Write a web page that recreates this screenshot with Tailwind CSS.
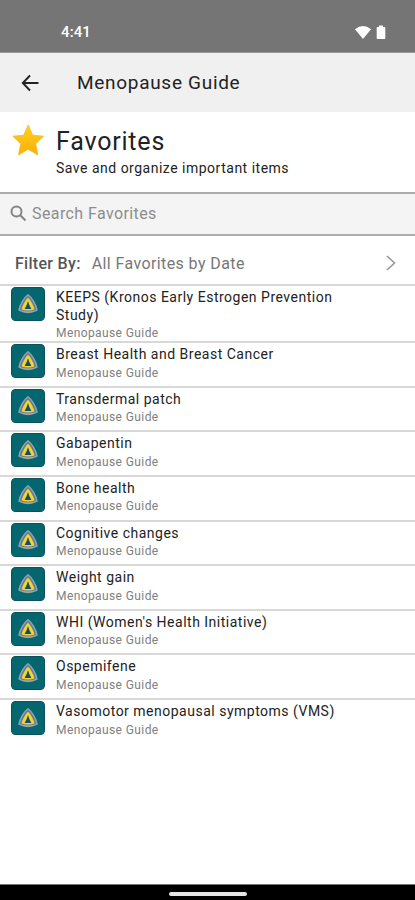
<!DOCTYPE html>
<html lang="en">
<head>
<meta charset="utf-8">
<title>Favorites</title>
<script src="https://cdn.jsdelivr.net/npm/@tailwindcss/browser@4"></script>
</head>
<body class="bg-white">
<svg class="hidden">
  <symbol id="guide" viewBox="0 0 33 33">
    <rect x=".5" y=".5" width="32" height="32" rx="4" fill="#04666f" stroke="#0b525b"/>
    <path d="M16.5 7.5C20 10 24.5 17 25.2 22.5C20 25.2 13 25.2 7.8 22.5C8.5 17 13 10 16.5 7.5Z" fill="#667b91" stroke="#8fa3b5" stroke-width="1.4" stroke-linejoin="round"/>
    <path d="M16.5 10.5C19 13 22 18 22.7 21.8C19 23.2 14 23.2 10.3 21.8C11 18 14 13 16.5 10.5Z" fill="#f2d531"/>
    <path d="M16.5 13.5L17.8 17.5L19.8 21.3H13.2L15.2 17.5Z" fill="#174e64"/>
    <path d="M11 23.6Q16.5 25 22 23.6" fill="none" stroke="#b5a58c" stroke-width="1"/>
  </symbol>
</svg>
<div class="flex h-[900px] w-[415px] flex-col overflow-hidden bg-white font-['Roboto','Noto_Sans',sans-serif] text-[#222]">
  <div class="flex h-[53px] shrink-0 items-start border-b border-[#989898] bg-[#757575] pl-[61px] pr-[28px] pt-[23px] text-white">
    <span class="text-[15px] font-medium leading-[19px] tracking-[.1px]">4:41</span>
    <svg class="ml-auto mt-[2px]" width="33" height="16" viewBox="0 0 33 16" fill="#fff"><path d="M1 4.2Q9-2.4 17 4.2L9 14Z"/><path d="M25 2V.5h4V2h1.5q.8 0 .8.8v10.4q0 .8-.8.8h-7q-.8 0-.8-.8V2.800q0-.8.8-.8Z"/></svg>
  </div>
  <div class="flex h-[59px] shrink-0 items-center bg-[#f0f0f0] pl-[21px]">
    <svg width="19" height="18" viewBox="0 0 19 18" fill="none" stroke="#222" stroke-width="1.9"><path d="M17.500 9H2M9 1.500L1.800 9L9 16.500"/></svg>
    <h1 class="ml-[37px] text-[19px] leading-[24px] tracking-[.7px]">Menopause Guide</h1>
  </div>
  <div class="flex h-[80px] shrink-0 pl-[12px] pt-[12px]">
    <svg width="33" height="33" viewBox="0 0 33 33"><defs><linearGradient id="gold" x2="0" y2="1"><stop stop-color="#ffd21c"/><stop offset="1" stop-color="#f9ae0b"/></linearGradient></defs><path d="M16.200 1L20.700 11.200L31.500 12.200L23.700 19.800L25.900 31L16.200 25.300L6.500 31L8.700 19.800L.8 12.200L11.700 11.200Z" fill="url(#gold)" stroke="#f8b91c" stroke-width=".8" stroke-linejoin="round"/></svg>
    <div class="ml-[11px] flex flex-col">
      <h2 class="mt-[2px] text-[25px] leading-[32px] tracking-[.8px]">Favorites</h2>
      <p class="mt-[1px] text-[14px] leading-[18px] tracking-[.5px]">Save and organize important items</p>
    </div>
  </div>
  <div class="flex h-[44px] shrink-0 items-center border-y-2 border-[#adadad] bg-[#f4f4f4] pl-[10px] text-[#8d8d8d]">
    <svg class="-mt-[2px]" width="17" height="17" viewBox="0 0 17 17" fill="none" stroke="#858585" stroke-width="2"><circle cx="6.500" cy="6.500" r="5"/><path d="M10.300 10.300L15.500 15.500"/></svg>
    <span class="ml-[5px] text-[16px] leading-[20px] tracking-[.4px]">Search Favorites</span>
  </div>
  <div class="flex h-[48px] shrink-0 items-center pl-[15px] pr-[18px] pt-[7px] text-[16px] leading-[20px] text-[#777]">
    <span class="font-medium tracking-[.3px] text-[#555]">Filter By:</span>
    <span class="ml-[11px] tracking-[.4px]">All Favorites by Date</span>
    <svg class="-mt-[2px] ml-auto" width="12" height="16" viewBox="0 0 12 16" fill="none" stroke="#999" stroke-width="1.600"><path d="M2 1L9.500 8L2 15"/></svg>
  </div>
  <ul id="list" class="flex flex-col"></ul>
  <div class="mt-auto flex h-[16px] shrink-0 justify-center border-t border-[#777] bg-black pt-[7px]"><div class="h-[4px] w-[78px] rounded-full bg-[#e4e4e4]"></div></div>
</div>
<script>
const items = [
  ["KEEPS (Kronos Early Estrogen Prevention Study)", 57],
  ["Breast Health and Breast Cancer", 44.650],
  ["Transdermal patch", 44.650],
  ["Gabapentin", 44.650],
  ["Bone health", 44.650],
  ["Cognitive changes", 44.650],
  ["Weight gain", 44.650],
  ["WHI (Women's Health Initiative)", 44.650],
  ["Ospemifene", 44.650],
  ["Vasomotor menopausal symptoms (VMS)", 44.650]
];
document.getElementById("list").innerHTML = items.map(([title, height]) => `
  <li class="flex shrink-0 border-t-2 border-[#d8d8d8] pl-[11px] pt-[1px]" style="height:${height}px">
    <svg class="shrink-0" width="34" height="34"><use href="#guide"/></svg>
    <div class="ml-[11px] w-[295px] pt-[2px]">
      <div class="text-[14px] leading-[17.500px] tracking-[.5px]">${title}</div>
      <div class="mt-[1px] text-[12px] leading-[17px] tracking-[.4px] text-[#808080]">Menopause Guide</div>
    </div>
  </li>`).join("");
</script>
</body>
</html>
